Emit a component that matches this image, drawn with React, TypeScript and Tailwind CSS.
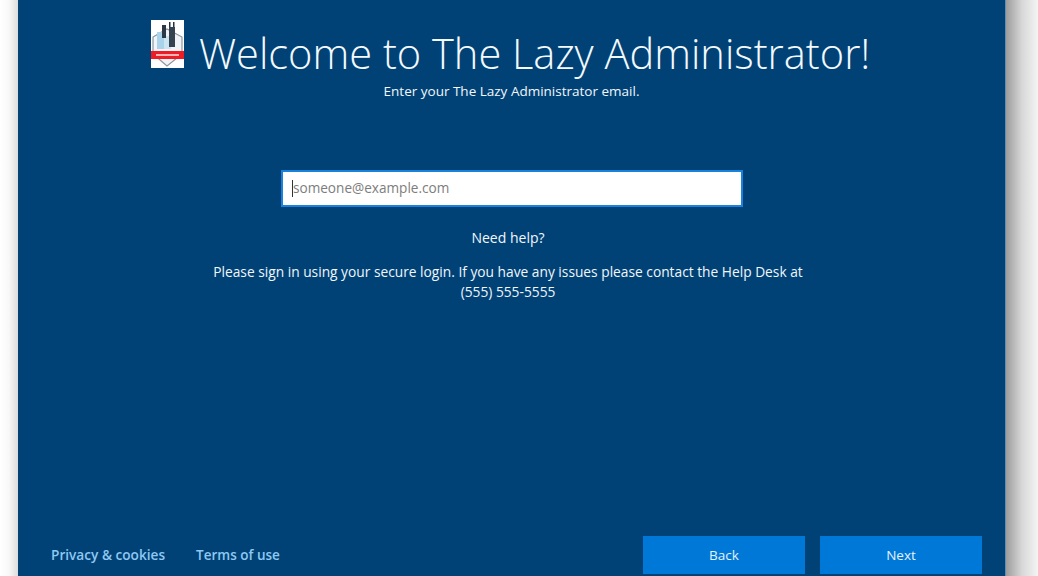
export default function App() {
  const font = { fontFamily: '"Open Sans", "Noto Sans", sans-serif' };
  return (
    <div style={font} className="flex h-[576px] w-[1038px] overflow-hidden bg-white">
      <div className="w-[18px] bg-gradient-to-r from-white via-[#f8f8f8] to-[#dcdcdc]" />
      <main className="flex w-[988px] flex-col border-r border-[#5f8fb5] bg-[#004276] text-white">
        <header className="ml-[133px] mt-5 flex items-start">
          <svg width="33" height="48" viewBox="0 0 33 48" className="shrink-0">
            <rect width="33" height="48" fill="#fff" />
            <path d="M2 17 L16 9 L31 17 L31 34 L16 46 L2 34 Z" fill="#f1f4f6" stroke="#8b97a0" strokeWidth="1.2" />
            <rect x="6" y="12" width="7" height="17" fill="#a8d3ea" />
            <rect x="13" y="16" width="7" height="13" fill="#cce5f2" />
            <rect x="11" y="5" width="4" height="13" fill="#2d3a46" />
            <rect x="18" y="2" width="1.5" height="6" fill="#28323c" />
            <rect x="22" y="2" width="1.5" height="6" fill="#28323c" />
            <rect x="18" y="7" width="6" height="20" fill="#35424f" />
            <rect x="0" y="31" width="33" height="8" fill="#ee1c25" />
            <rect x="5" y="34" width="23" height="2" fill="#f7b5b5" />
          </svg>
          <h1 className="ml-[15px] mt-[5px] whitespace-nowrap text-[41.6px] leading-[56px] font-light text-[#f4f9fd]">
            Welcome to The Lazy Administrator!
          </h1>
        </header>
        <p className="mt-0 w-[987px] text-center text-[13.5px] leading-5 text-[#f2f6fa]">
          Enter your The Lazy Administrator email.
        </p>
        <div className="ml-[263px] mt-[69px] flex h-[37px] w-[462px] items-center border-2 border-[#1a82dc] bg-white pl-[9px]">
          <span className="h-[17px] w-px bg-[#333]" />
          <span className="text-[13.6px] text-[#7d7d7d]">someone@example.com</span>
        </div>
        <div className="ml-[190px] w-[600px] text-center leading-5 text-[#f2f6fa]">
          <p className="mt-[21px] text-[14px]">Need help?</p>
          <p className="mt-[14px] text-[13.75px]">
            Please sign in using your secure login. If you have any issues please contact the Help Desk at (555) 555-5555
          </p>
        </div>
        <footer className="mb-0.5 mt-auto flex items-center pl-[33px] pr-[23px]">
          <a className="text-[13.65px] font-semibold text-[#8ec8f2]">Privacy &amp; cookies</a>
          <a className="ml-[31px] text-[13.5px] font-semibold text-[#8ec8f2]">Terms of use</a>
          <button className="ml-auto h-[38px] w-[162px] bg-[#0078d7] text-[13.5px] text-[#e6f2fb]">Back</button>
          <button className="ml-[15px] h-[38px] w-[162px] bg-[#0078d7] text-[13.5px] text-[#e6f2fb]">Next</button>
        </footer>
      </main>
      <div className="flex-1 bg-gradient-to-r from-[#9c9c9c] via-[#d8d8d8] to-[#f4f4f4]" />
    </div>
  );
}
